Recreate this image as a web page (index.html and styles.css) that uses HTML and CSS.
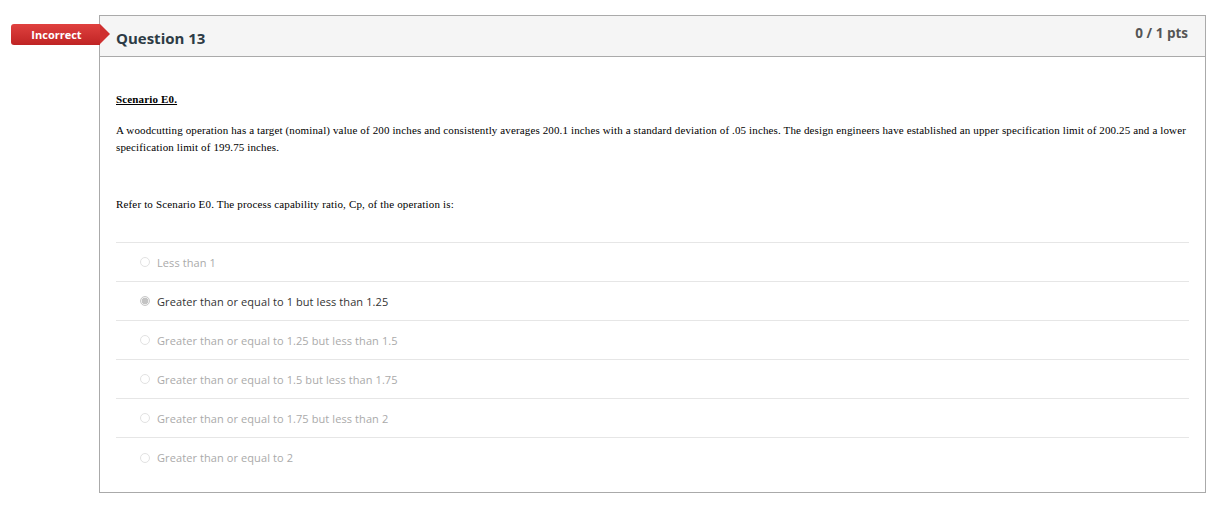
FILE: index.html
```html
<!DOCTYPE html>
<html>
<head>
<meta charset="utf-8">
<link rel="stylesheet" href="styles.css">
</head>
<body>
<div class="page">
  <div class="question">
    <div class="badge">Incorrect</div>
    <div class="q-header">
      <span class="q-name">Question 13</span>
      <span class="q-pts">0 / 1 pts</span>
    </div>
    <div class="q-body">
      <p class="scenario"><u>Scenario E0.</u></p>
      <p class="text">A woodcutting operation has a target (nominal) value of 200 inches and consistently averages 200.1 inches with a standard deviation of .05 inches. The design engineers have established an upper specification limit of 200.25 and a lower specification limit of 199.75 inches.</p>
      <p class="text refer">Refer to Scenario E0. The process capability ratio, Cp, of the operation is:</p>
      <div class="answers">
        <div class="answer"><span class="radio"></span><span>Less than 1</span></div>
        <div class="answer selected"><span class="radio"></span><span>Greater than or equal to 1 but less than 1.25</span></div>
        <div class="answer"><span class="radio"></span><span>Greater than or equal to 1.25 but less than 1.5</span></div>
        <div class="answer"><span class="radio"></span><span>Greater than or equal to 1.5 but less than 1.75</span></div>
        <div class="answer"><span class="radio"></span><span>Greater than or equal to 1.75 but less than 2</span></div>
        <div class="answer last"><span class="radio"></span><span>Greater than or equal to 2</span></div>
      </div>
    </div>
  </div>
</div>
</body>
</html>
```

FILE: styles.css
```css
* { box-sizing: border-box; }
html, body { margin: 0; padding: 0; background: #fff; }
.page {
  padding: 15px 19px 0 99px;
  font-family: "Open Sans", "Liberation Sans", sans-serif;
}
.question {
  position: relative;
  border: 1px solid #aaaaaa;
  height: 478px;
}
.badge {
  position: absolute;
  left: -89px;
  top: 8px;
  width: 89px;
  height: 21px;
  background: linear-gradient(#e0413f, #bf2424);
  color: #fff;
  font-weight: 700;
  font-size: 11px;
  line-height: 21px;
  text-align: center;
  border-radius: 3px 0 0 3px;
  padding-left: 2px;
}
.badge::after {
  content: "";
  position: absolute;
  right: -10px;
  top: 0;
  border-top: 10.5px solid transparent;
  border-bottom: 10.5px solid transparent;
  border-left: 10px solid #cf3030;
}
.q-header {
  height: 41px;
  background: #f5f5f5;
  border-bottom: 1px solid #aaaaaa;
  display: flex;
  justify-content: space-between;
  align-items: flex-start;
  padding: 0 17px 0 16px;
}
.q-name {
  font-size: 15px;
  font-weight: 700;
  color: #2d3b45;
  margin-top: 12px;
}
.q-pts {
  font-size: 13.5px;
  font-weight: 700;
  color: #555;
  margin-top: 8px;
}
.q-body {
  padding: 34px 16px 0 16px;
  font-family: "Liberation Serif", serif;
  color: #000;
}
.scenario {
  margin: 0;
  font-size: 11px;
  font-weight: 700;
  line-height: 17px;
  letter-spacing: 0.15px;
}
.text {
  margin: 14px 0 0 0;
  font-size: 11px;
  line-height: 17px;
  letter-spacing: 0.13px;
}
.refer { margin-top: 40px; letter-spacing: 0.16px; }
.answers {
  margin-top: 29px;
  border-top: 1px solid #e6e6e6;
  font-family: "Open Sans", "Liberation Sans", sans-serif;
}
.answer {
  display: flex;
  align-items: center;
  height: 39px;
  border-bottom: 1px solid #e6e6e6;
  padding-left: 24px;
  font-size: 11px;
  letter-spacing: 0.09px;
  color: #aaaaaa;
}
.answer.last { border-bottom: none; }
.answer.selected { color: #333; }
.radio {
  width: 10px;
  height: 10px;
  border-radius: 50%;
  border: 1px solid #e2e2e2;
  background: #fff;
  margin-right: 7px;
}
.answer.selected .radio {
  border-color: #c8c8c8;
  background: radial-gradient(circle, #c4c4c4 0 3px, #f0f0f0 3.5px);
}
```
